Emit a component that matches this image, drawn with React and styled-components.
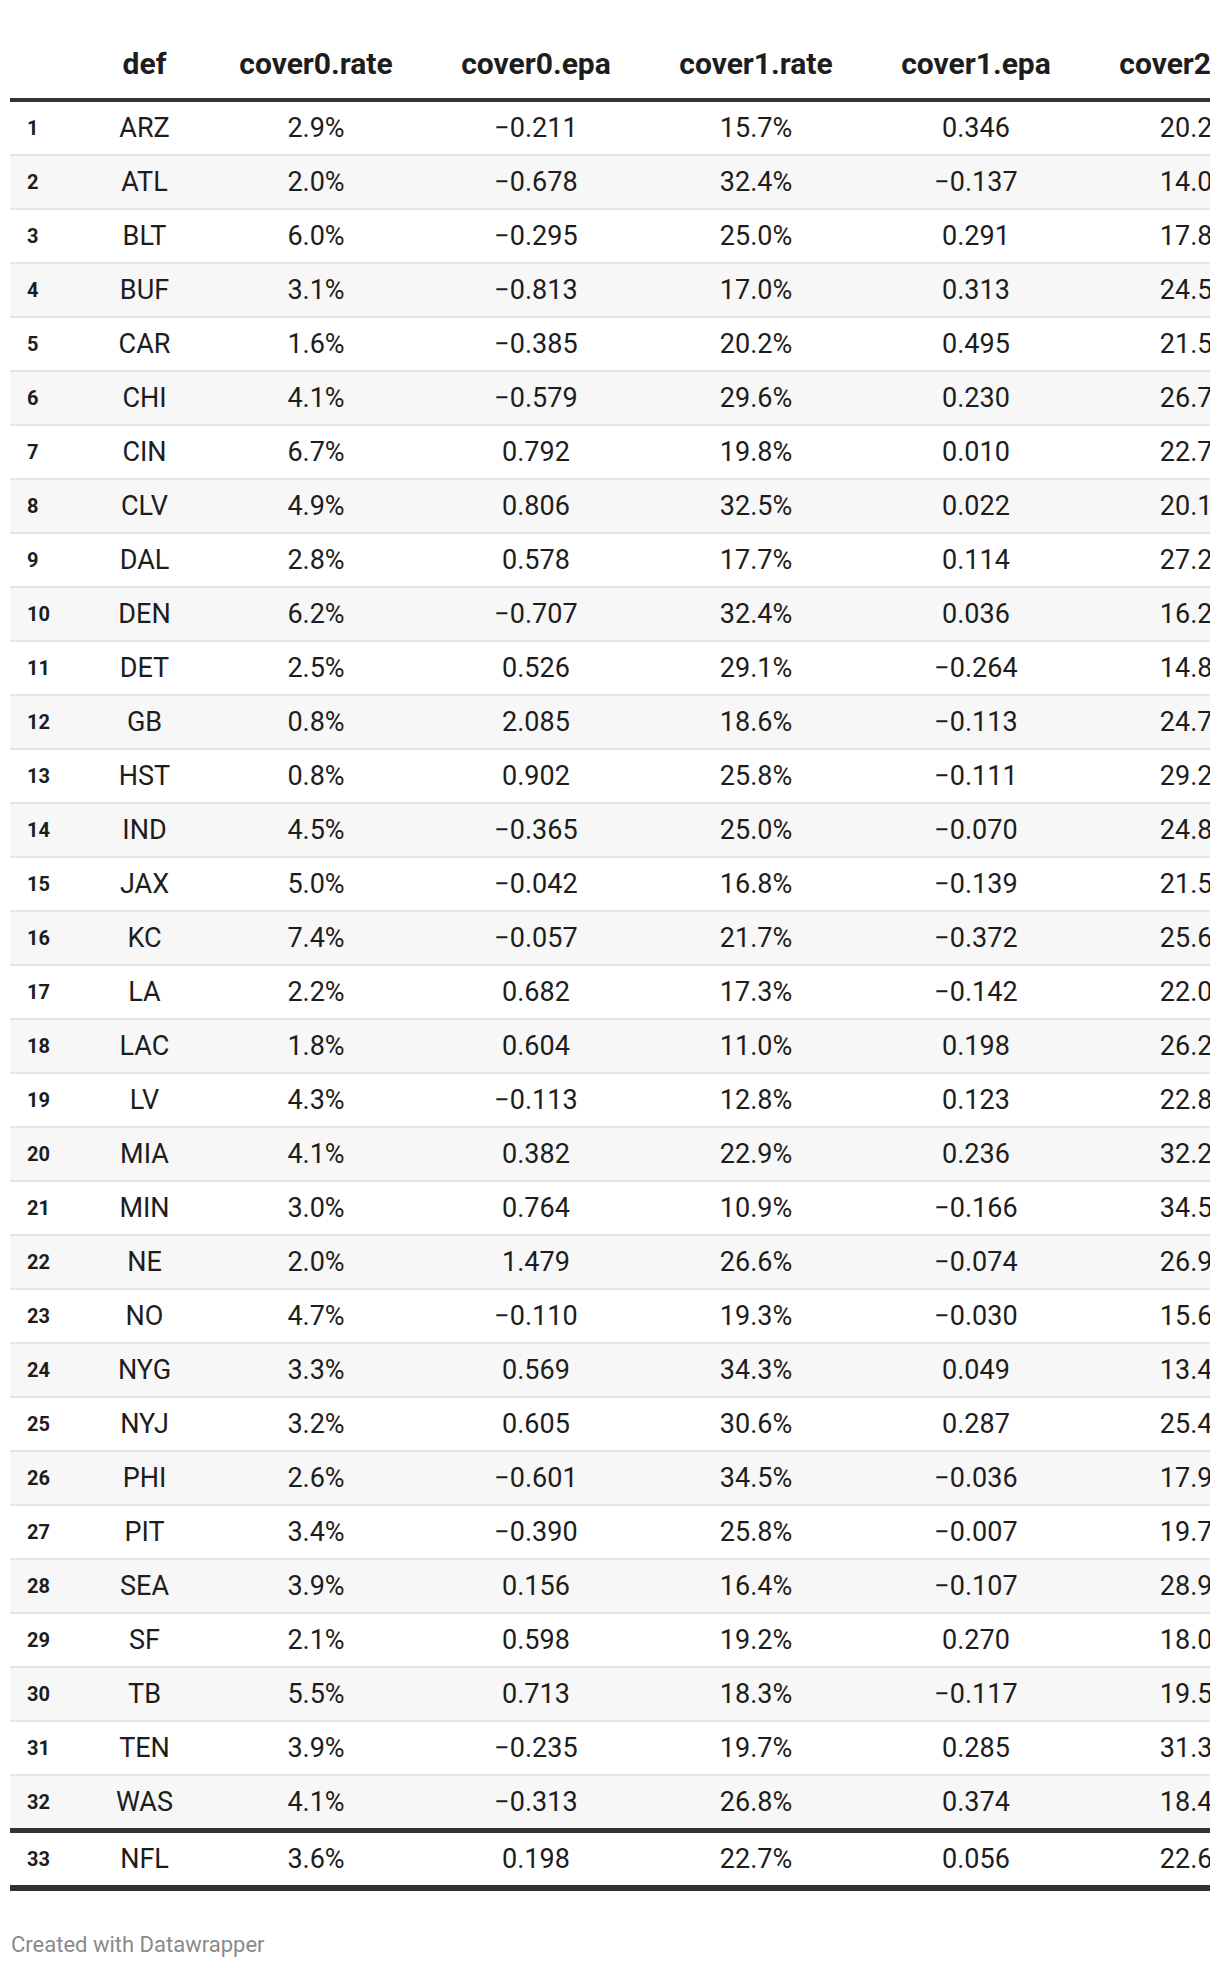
import React from "react";
import styled, { createGlobalStyle } from "styled-components";

const Global = createGlobalStyle`
  html, body { margin: 0; padding: 0; background: #fff; }
  body { font-family: Roboto, "Liberation Sans", sans-serif; color: #1a1a1a; }
`;

const RAW = `ARZ 2.9 -0.211 15.7 0.346 20.2
ATL 2.0 -0.678 32.4 -0.137 14.0
BLT 6.0 -0.295 25.0 0.291 17.8
BUF 3.1 -0.813 17.0 0.313 24.5
CAR 1.6 -0.385 20.2 0.495 21.5
CHI 4.1 -0.579 29.6 0.230 26.7
CIN 6.7 0.792 19.8 0.010 22.7
CLV 4.9 0.806 32.5 0.022 20.1
DAL 2.8 0.578 17.7 0.114 27.2
DEN 6.2 -0.707 32.4 0.036 16.2
DET 2.5 0.526 29.1 -0.264 14.8
GB 0.8 2.085 18.6 -0.113 24.7
HST 0.8 0.902 25.8 -0.111 29.2
IND 4.5 -0.365 25.0 -0.070 24.8
JAX 5.0 -0.042 16.8 -0.139 21.5
KC 7.4 -0.057 21.7 -0.372 25.6
LA 2.2 0.682 17.3 -0.142 22.0
LAC 1.8 0.604 11.0 0.198 26.2
LV 4.3 -0.113 12.8 0.123 22.8
MIA 4.1 0.382 22.9 0.236 32.2
MIN 3.0 0.764 10.9 -0.166 34.5
NE 2.0 1.479 26.6 -0.074 26.9
NO 4.7 -0.110 19.3 -0.030 15.6
NYG 3.3 0.569 34.3 0.049 13.4
NYJ 3.2 0.605 30.6 0.287 25.4
PHI 2.6 -0.601 34.5 -0.036 17.9
PIT 3.4 -0.390 25.8 -0.007 19.7
SEA 3.9 0.156 16.4 -0.107 28.9
SF 2.1 0.598 19.2 0.270 18.0
TB 5.5 0.713 18.3 -0.117 19.5
TEN 3.9 -0.235 19.7 0.285 31.3
WAS 4.1 -0.313 26.8 0.374 18.4
NFL 3.6 0.198 22.7 0.056 22.6`;

const fmt = (s) => s.replace("-", "\u2212");

const ROWS = RAW.split("\n").map((line, i) => {
  const [team, c0r, c0e, c1r, c1e, c2r] = line.trim().split(/\s+/);
  return {
    rank: i + 1,
    team,
    cells: [c0r + "%", fmt(c0e), c1r + "%", fmt(c1e), c2r + "%"],
  };
});

const HEADERS = ["cover0.rate", "cover0.epa", "cover1.rate", "cover1.epa", "cover2.rate"];

const COLS = "73px 123px repeat(5, 220px)";

const Page = styled.div`
  padding: 0 10px;
  width: 1200px;
`;

const Clip = styled.div`
  width: 1200px;
  overflow: hidden;
`;

const Table = styled.div`
  display: flex;
  flex-direction: column;
  width: max-content;
`;

const HeaderRow = styled.div`
  display: grid;
  grid-template-columns: ${COLS};
  height: 98px;
  align-items: end;
  border-bottom: 4px solid #333;
`;

const HeadCell = styled.div`
  font-weight: 700;
  font-size: 30px;
  line-height: 28px;
  padding-bottom: 20px;
  text-align: center;
  white-space: nowrap;
  color: #1d1d1d;
`;

const Row = styled.div`
  display: grid;
  grid-template-columns: ${COLS};
  height: 52px;
  align-items: center;
  background: ${(p) => (p.$striped ? "#f7f7f7" : "#fff")};
  border-top: ${(p) => (p.$total ? "5px solid #333" : "none")};
  border-bottom: ${(p) =>
    p.$total ? "6px solid #333" : p.$beforeTotal ? "none" : "2px solid #e6e6e6"};
`;

const RankCell = styled.div`
  font-weight: 700;
  font-size: 20px;
  padding-left: 17px;
  color: #1d1d1d;
`;

const Cell = styled.div`
  font-size: 27px;
  text-align: center;
  white-space: nowrap;
  color: #1d1d1d;
`;

const Footer = styled.div`
  margin-top: 41px;
  font-size: 22px;
  line-height: 26px;
  color: #8a8a8a;
  padding-left: 1px;
`;

export default function App() {
  return (
    <Page>
      <Global />
      <Clip>
        <Table>
          <HeaderRow>
            <HeadCell />
            <HeadCell>def</HeadCell>
            {HEADERS.map((h) => (
              <HeadCell key={h}>{h}</HeadCell>
            ))}
          </HeaderRow>
          {ROWS.map((r) => (
            <Row
              key={r.rank}
              $striped={r.rank % 2 === 0 && r.rank !== 33}
              $total={r.rank === 33}
              $beforeTotal={r.rank === 32}
            >
              <RankCell>{r.rank}</RankCell>
              <Cell>{r.team}</Cell>
              {r.cells.map((c, i) => (
                <Cell key={i}>{c}</Cell>
              ))}
            </Row>
          ))}
        </Table>
      </Clip>
      <Footer>Created with Datawrapper</Footer>
    </Page>
  );
}
